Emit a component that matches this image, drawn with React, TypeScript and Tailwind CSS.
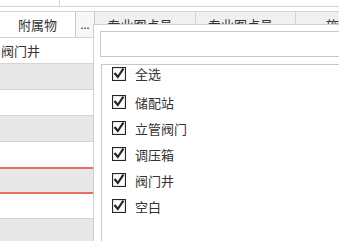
import React from "react";

function Check() {
  return (
    <svg width="14" height="14" viewBox="0 0 14 14" className="shrink-0">
      <rect x="0.5" y="0.5" width="13" height="13" fill="#fff" stroke="#262626" strokeWidth="1.2" />
      <path d="M3.2 6.8 L5.8 10 L10.8 2.6" fill="none" stroke="#262626" strokeWidth="2.2" strokeLinecap="square" />
    </svg>
  );
}

const items = ["全选", "储配站", "立管阀门", "调压箱", "阀门井", "空白"];

export default function App() {
  return (
    <div className="relative w-[339px] h-[241px] overflow-hidden bg-white text-[#333] text-[13px] leading-none font-['Microsoft_YaHei','Noto_Sans_CJK_SC',sans-serif]">
      {/* top strip */}
      <div className="h-[7px] border-b border-[#d4d4d4] flex">
        <div className="w-[60px] shrink-0 border-r border-[#d4d4d4]" />
      </div>
      <div className="h-[4px]" />
      {/* header */}
      <div className="flex h-[27px] border-y border-[#d4d4d4] overflow-hidden whitespace-nowrap">
        <div className="w-[75px] shrink-0 bg-white flex items-center justify-center">附属物</div>
        <div className="w-[20px] shrink-0 border-x border-[#c8c8c8] bg-[#f7f7f7] flex items-end justify-center pb-[7px] text-[11px] text-[#222]">...</div>
        <div className="flex-1 min-w-0 flex bg-[#f0f0f0]">
          <div className="w-[101px] shrink-0 border-r border-[#d4d4d4] flex items-center justify-center pr-[10px]">专业图点号</div>
          <div className="w-[100px] shrink-0 border-r border-[#d4d4d4] flex items-center justify-center pr-[10px]">专业图点号</div>
          <div className="w-[120px] shrink-0 flex items-center pl-[30px]">施工图点号</div>
        </div>
      </div>
      {/* rows */}
      <div className="w-[93px]">
        <div className="h-[26px] border-b border-[#d4d4d4] bg-white flex items-center pl-[1px]">阀门井</div>
        <div className="h-[26px] border-b border-[#d4d4d4] bg-[#e8e8e8]" />
        <div className="h-[26px] border-b border-[#d4d4d4] bg-white" />
        <div className="h-[26px] border-b border-[#d4d4d4] bg-[#e8e8e8]" />
        <div className="h-[27px] border-b-2 border-[#e8705f] bg-white" />
        <div className="h-[25px] border-b-2 border-[#e8705f] bg-[#e8e8e8]" />
        <div className="h-[25px] border-b border-[#d4d4d4] bg-white" />
        <div className="h-[30px] bg-[#e8e8e8]" />
      </div>
      {/* dropdown popup */}
      <div className="absolute left-[93px] top-[24px] w-[260px] h-[230px] border-l border-t border-[#cfcfcf] bg-white pl-[6px] pt-[6px]">
        <div className="w-[300px] h-[26px] border border-[#c8c8c8] bg-white" />
        <div className="mt-[7px] ml-[1px] w-[300px] h-[200px] border border-[#c8c8c8] pl-[10px]">
          {items.map((t, i) => (
            <div
              key={t}
              className={
                i === 0
                  ? "h-[24px] flex items-start pt-[2px] gap-[9px]"
                  : "h-[26px] flex items-center gap-[9px]"
              }
            >
              <Check />
              <span className={i === 0 ? "leading-[14px]" : ""}>{t}</span>
            </div>
          ))}
        </div>
      </div>
    </div>
  );
}
